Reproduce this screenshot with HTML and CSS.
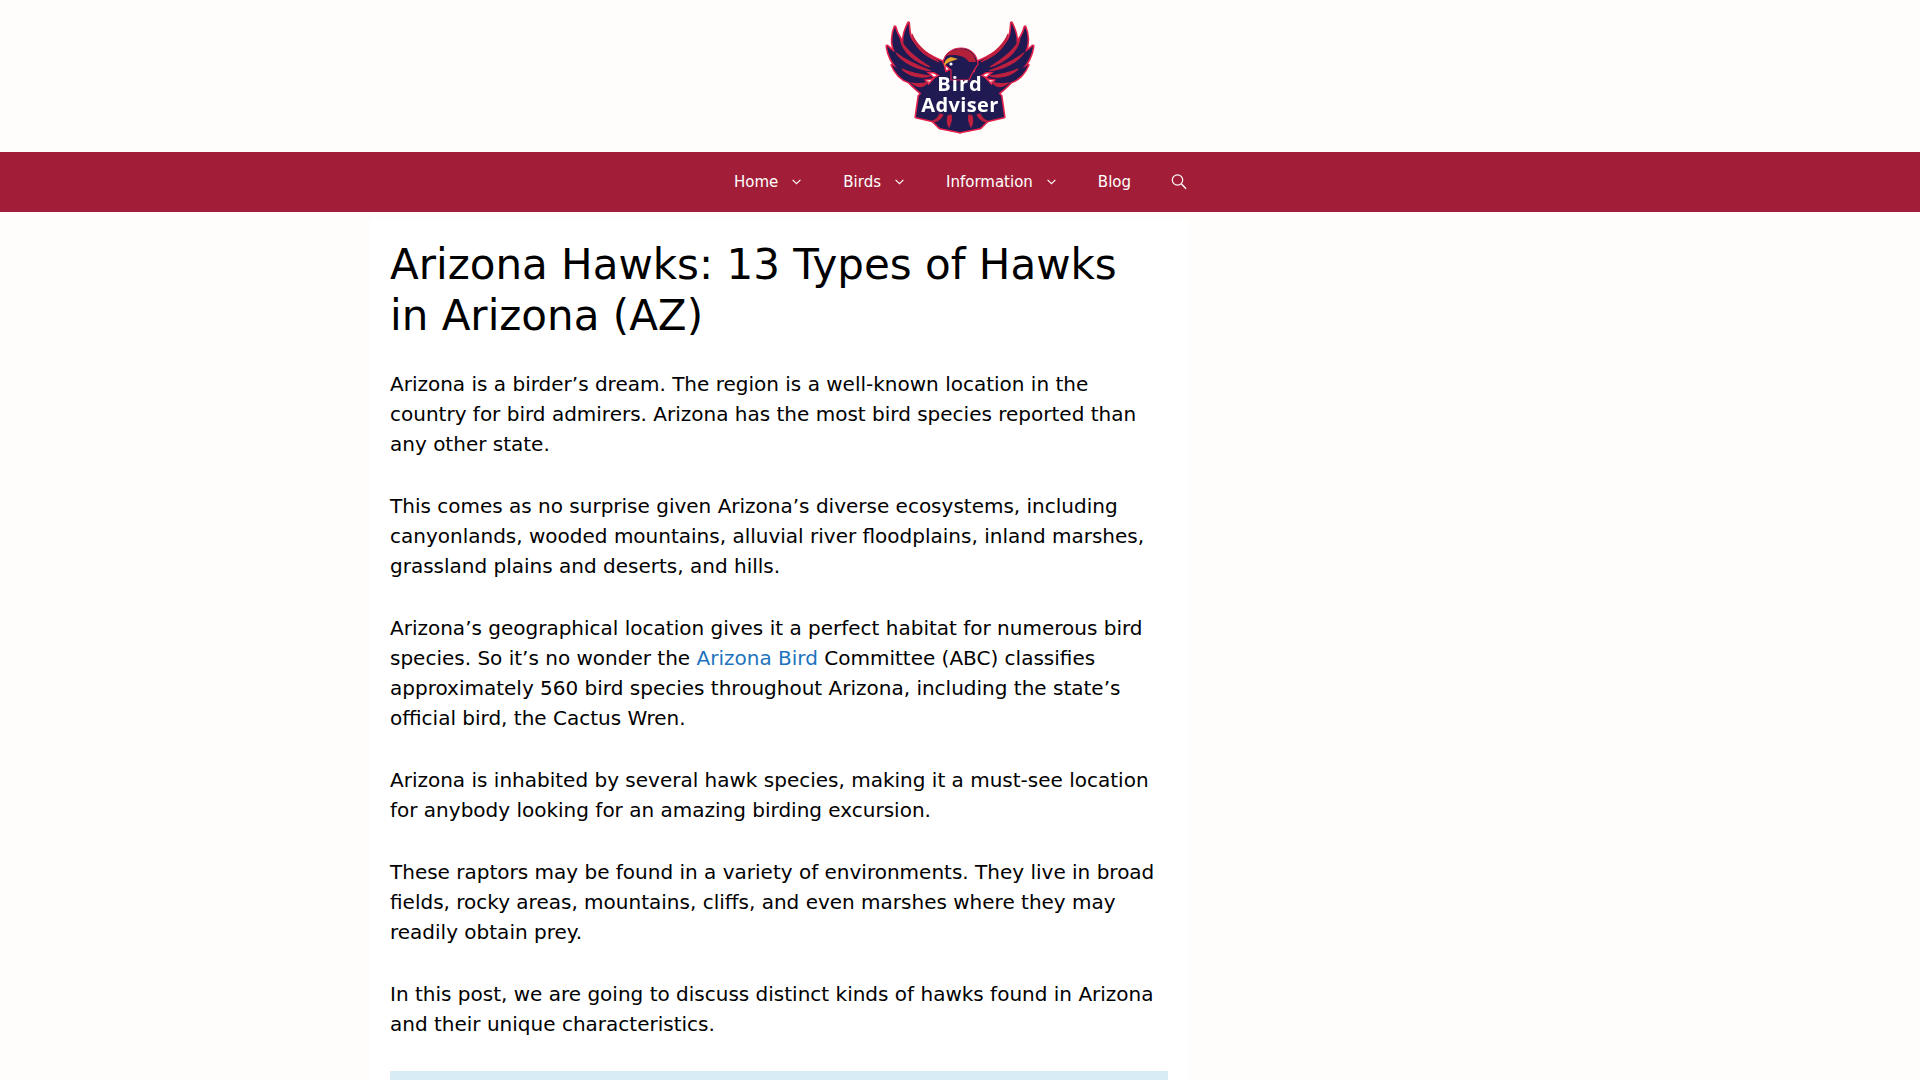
FILE: index.html
```html
<!DOCTYPE html>
<html lang="en">
<head>
<meta charset="utf-8">
<title>Arizona Hawks</title>
<link rel="stylesheet" href="styles.css">
</head>
<body>
<header class="site-header">
  <svg class="logo" width="150" height="114" viewBox="0 0 150 114" aria-hidden="true">
    <defs>
      <g id="body">
        <path d="M24 62 C17 60 10 53 7 45 C13 49 22 52 34 54 L46 68 L40 76 C34 72 29 67 24 62Z"/>
        <path d="M14 50 C8 44 3 35 2 26 C8 32 16 36 26 38 L48 58 L36 60 C28 58 20 55 14 50Z"/>
        <path d="M10 32 C6 24 7 14 10 7 C12 15 16 22 24 28 L54 52 L42 52 C30 46 16 42 10 32Z"/>
        <path d="M19 26 C17 18 20 10 23.5 3 C24 9 24 15 27 20 C32 28 44 36 58 42 L62 60 L46 50 C36 44 22 36 19 26Z"/>
        <path d="M75 45 L50 58 L34 76 L31 97 L48 101 L55 108 L75 112Z"/>
      </g>
      <g id="stripes">
        <path d="M27 14 C31 25 42 34 54 42 C42 37 29 29 27 14Z"/>
        <path d="M15 18 C19 29 32 39 45 47 C32 43 17 33 15 18Z"/>
        <path d="M11 33 C20 40 33 46 46 51 C33 50 18 43 11 33Z"/>
        <path d="M17 49 C26 53 36 55 45 56 C36 59 24 56 17 49Z"/>
        <path d="M27 63 C33 64 38 64 43 62 C39 68 33 68 27 63Z"/>
        <path d="M55 94 C53 98 51 100 48 101 C51 102 55 100 58 95Z"/>
        <path d="M63 96 C62 100 62 104 64 107 C66 103 67 99 66 95Z"/>
      </g>
    </defs>
    <use href="#body" class="outline"/>
    <use href="#body" class="outline" transform="matrix(-1 0 0 1 150 0)"/>
    <use href="#body" class="inner"/>
    <use href="#body" class="inner" transform="matrix(-1 0 0 1 150 0)"/>
    <use href="#stripes" class="stripe"/>
    <use href="#stripes" class="stripe" transform="matrix(-1 0 0 1 150 0)"/>
    <path class="head" d="M58 43 C59 34 67 28 76 28 C86 28 92 35 93 44 L88 52 L84 60 L66 60 L66 50 C62 47 60 45 58 43Z"/>
    <path class="cap" d="M60 36 C64 31 70 29 76 29 C84 29 90 34 91 42 L84 42 C79 35 70 34 60 36Z"/>
    <path class="beak" d="M59 46 C59 41 62 38 66 37 L73 39 L67 41 C64 42 62 43 59 46Z"/>
    <circle class="eye" cx="66" cy="44" r="1.6"/>
    <text class="logo-text" x="75" y="71" text-anchor="middle">Bird</text>
    <text class="logo-text logo-text-tight" x="75" y="92" text-anchor="middle">Adviser</text>
  </svg>
</header>
<nav class="nav-bar">
  <ul class="nav-list">
    <li class="nav-item">Home<svg class="chev" viewBox="0 0 9 6"><path d="M.6 .8l3.9 3.9 3.9-3.9" fill="none" stroke="currentColor" stroke-width="1.1"/></svg></li>
    <li class="nav-item">Birds<svg class="chev" viewBox="0 0 9 6"><path d="M.6 .8l3.9 3.9 3.9-3.9" fill="none" stroke="currentColor" stroke-width="1.1"/></svg></li>
    <li class="nav-item">Information<svg class="chev" viewBox="0 0 9 6"><path d="M.6 .8l3.9 3.9 3.9-3.9" fill="none" stroke="currentColor" stroke-width="1.1"/></svg></li>
    <li class="nav-item">Blog</li>
    <li class="nav-item"><svg class="search" viewBox="0 0 16 16"><circle cx="6.5" cy="6" r="5.2" fill="none" stroke="currentColor" stroke-width="1.2"/><path d="M10.3 9.8L15 14.8" stroke="currentColor" stroke-width="1.3"/></svg></li>
  </ul>
</nav>
<div class="page">
  <main class="content">
    <h1>Arizona Hawks: 13 Types of Hawks in Arizona (AZ)</h1>
    <p>Arizona is a birder’s dream. The region is a well-known location in the country for bird admirers. Arizona has the most bird species reported than any other state.</p>
    <p>This comes as no surprise given Arizona’s diverse ecosystems, including canyonlands, wooded mountains, alluvial river floodplains, inland marshes, grassland plains and deserts, and hills.</p>
    <p>Arizona’s geographical location gives it a perfect habitat for numerous bird species. So it’s no wonder the <a href="#">Arizona Bird</a> Committee (ABC) classifies approximately 560 bird species throughout Arizona, including the state’s official bird, the Cactus Wren.</p>
    <p>Arizona is inhabited by several hawk species, making it a must-see location for anybody looking for an amazing birding excursion.</p>
    <p>These raptors may be found in a variety of environments. They live in broad fields, rocky areas, mountains, cliffs, and even marshes where they may readily obtain prey.</p>
    <p>In this post, we are going to discuss distinct kinds of hawks found in Arizona and their unique characteristics.</p>
    <div class="toc"></div>
  </main>
</div>
</body>
</html>
```
FILE: styles.css
```css
* { box-sizing: border-box; }
html, body { margin: 0; height: 1080px; overflow: hidden; }
body { background: #fffdfb; font-family: "DejaVu Sans", sans-serif; color: #000; }
.site-header { height: 152px; display: flex; justify-content: center; align-items: flex-start; padding-top: 20px; }
.logo { display: block; filter: blur(.35px); }
.outline { fill: #e4214b; stroke: #e4214b; stroke-width: 3.2; stroke-linejoin: round; }
.inner { fill: #201a52; }
.stripe { fill: #c0203f; stroke: #c0203f; stroke-width: 1.1; }
.head { fill: #201a52; stroke: #e4214b; stroke-width: 1.2; }
.cap { fill: #b3203a; }
.beak { fill: #eaa52c; }
.eye { fill: #fff; }
.logo-text { font-family: "Open Sans", sans-serif; font-weight: 700; font-size: 20px; letter-spacing: 1px; fill: #fff; }
.logo-text-tight { letter-spacing: .4px; }
.nav-bar { height: 60px; background: #a21e38; color: #fff; }
.nav-list { list-style: none; margin: 0; padding: 0 0 0 714px; display: flex; height: 60px; align-items: center; font-size: 15px; }
.nav-item { padding: 0 20px; display: flex; align-items: center; }
.chev { width: 9px; height: 6px; margin: 0 2px 0 14px; }
.search { width: 16px; height: 16px; }
.page { padding: 7px 0 0 370px; }
.content { width: 818px; background: #fff; padding: 20px 20px 0; }
h1 { margin: 0 0 28px; font-size: 42px; font-weight: 400; line-height: 51px; }
p { margin: 0 0 32px; font-size: 20px; line-height: 30px; }
a { color: #1e73be; text-decoration: none; }
.toc { height: 40px; background: #d8ecf5; }
```
